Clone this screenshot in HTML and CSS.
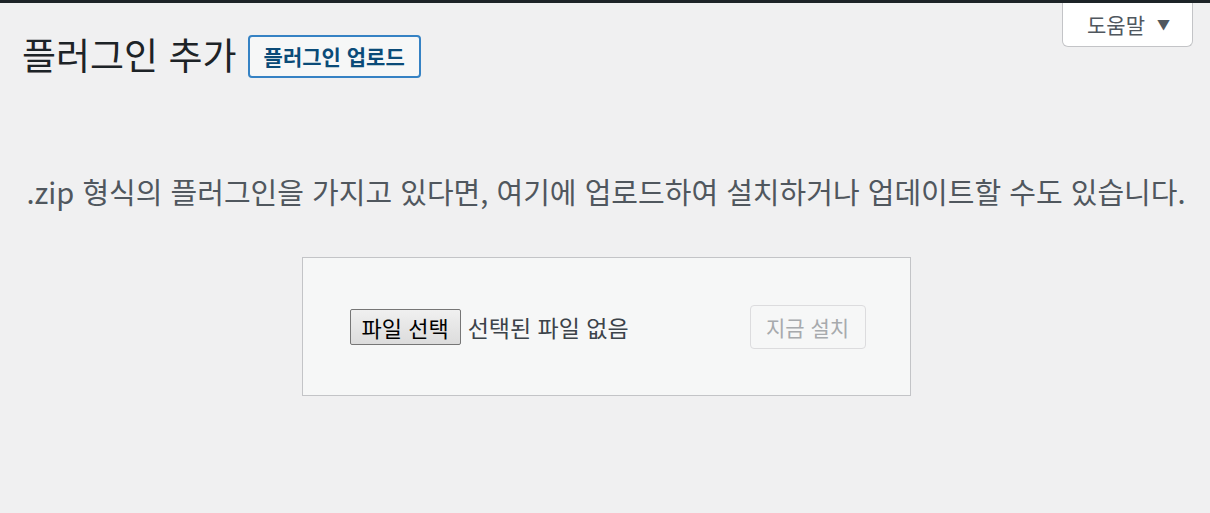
FILE: index.html
```html
<!DOCTYPE html>
<html lang="ko">
<head>
  <meta charset="UTF-8">
  <title>플러그인 추가</title>
  <link rel="stylesheet" href="styles.css">
</head>
<body>
  <div class="adminbar"></div>
  <div class="screen-meta">
    <button class="help-tab">도움말 <span class="arrow">▼</span></button>
  </div>
  <div class="wrap">
    <div class="heading">
      <h1>플러그인 추가</h1>
      <button class="upload-toggle">플러그인 업로드</button>
    </div>
    <p class="install-help">.zip 형식의 플러그인을 가지고 있다면, 여기에 업로드하여 설치하거나 업데이트할 수도 있습니다.</p>
    <form class="upload-form">
      <div class="file-field">
        <span class="file-btn">파일 선택</span>
        <span class="file-name">선택된 파일 없음</span>
      </div>
      <button type="button" class="install-btn" disabled>지금 설치</button>
    </form>
  </div>
</body>
</html>
```

FILE: styles.css
```css
html, body { margin: 0; padding: 0; }
body {
  background: #f0f0f1;
  font-family: "Noto Sans CJK KR", "Noto Sans", sans-serif;
  color: #3c434a;
  height: 513px;
  overflow: hidden;
}
.adminbar { height: 3px; background: #1d2327; }

.screen-meta { display: flex; justify-content: flex-end; padding-right: 17px; height: 0; }
.help-tab {
  width: 131px; height: 44px;
  background: #fff;
  border: 1px solid #c3c4c7; border-top: none;
  border-radius: 0 0 6px 6px;
  font-family: inherit; font-size: 21px; color: #50575e;
  display: flex; align-items: center; justify-content: center; gap: 12px;
  padding: 0 0 2px 2px;
}
.help-tab .arrow { font-size: 13px; color: #50575e; }

.wrap { padding: 0 20px 0 22px; }
.heading { display: flex; align-items: center; gap: 11px; padding-top: 31px; }
h1 {
  margin: 0; font-size: 37px; font-weight: 400; color: #1d2327; line-height: 44px;
  position: relative; top: -2px;
}
.upload-toggle {
  height: 43px; padding: 0 14px;
  background: #f6f7f7;
  border: 2px solid #3582c4; border-radius: 4px;
  font-family: inherit; font-size: 21px; font-weight: 700; color: #0a4b78;
}

.install-help {
  margin: 0; padding: 94px 0 0;
  text-align: center; font-size: 29px; color: #50575e; line-height: 38px;
}

.upload-form {
  width: 609px; margin: 47px auto 0;
  box-sizing: border-box; height: 139px;
  background: #f6f7f7; border: 1px solid #c3c4c7;
  display: flex; align-items: center; justify-content: space-between;
  padding: 0 44px 0 47px;
}
.file-field { display: flex; align-items: center; gap: 7px; }
.file-btn {
  height: 36px; box-sizing: border-box; padding: 0 11px;
  display: flex; align-items: center;
  background: linear-gradient(#f0f0f0, #dcdcdc);
  border: 1px solid #767676; border-radius: 2px;
  font-size: 22px; color: #000;
}
.file-name { font-size: 23px; color: #3c434a; }
.install-btn {
  width: 116px; height: 44px;
  background: #f6f7f7; border: 1px solid #dcdcde; border-radius: 4px;
  font-family: inherit; font-size: 21px; color: #a7aaad;
}
```
